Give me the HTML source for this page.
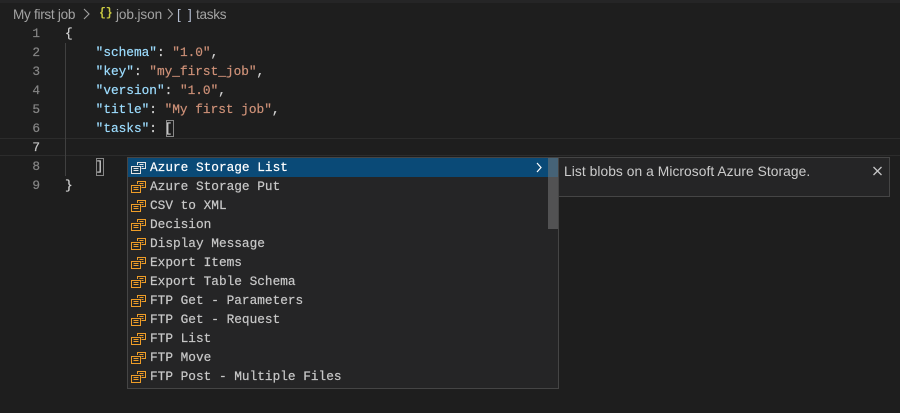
<!DOCTYPE html>
<html><head><meta charset="utf-8"><style>
html,body{margin:0;padding:0;background:#1e1e1e;width:900px;height:413px;overflow:hidden}
div,span{box-sizing:border-box}
.a{position:absolute}
.m{font-family:"Liberation Mono",monospace;font-size:12.77px;white-space:pre;line-height:19px;-webkit-text-stroke:.2px}
.ln{left:0;width:40px;text-align:right;color:#858585}
.c{left:65px;color:#d4d4d4}
.k{color:#9cdcfe}.s{color:#ce9178}
.row{left:128px;width:420px;height:19px;color:#c8c8c8}
.row span{position:absolute;left:22px;top:0}
.row svg{position:absolute;left:3px;top:3px}
.b{font:13.6px/19px 'Liberation Sans',sans-serif;color:#a3a3a3;white-space:pre;letter-spacing:-.3px}
</style></head><body>
<div class="a" style="left:0;top:0;width:900px;height:3px;background:#252526"></div>
<div class="a b" style="left:13px;top:5px">My first job</div>
<svg class="a" style="left:83px;top:8px" width="8" height="12"><path d="M1 1l5 5-5 5" fill="none" stroke="#a0a0a0" stroke-width="1.1"/></svg>
<div class="a" style="left:99px;top:4px;font:bold 11.5px/19px 'Liberation Mono',monospace;color:#cbcb41;letter-spacing:-.2px">{}</div>
<div class="a b" style="left:116px;top:5px;letter-spacing:-.1px">job.json</div>
<svg class="a" style="left:167px;top:8px" width="7" height="12"><path d="M1 1l4.500 5-4.500 5" fill="none" stroke="#a0a0a0" stroke-width="1.1"/></svg>
<div class="a b" style="left:177px;top:5px;color:#b4bdd0;letter-spacing:0">[</div>
<div class="a b" style="left:188px;top:5px;color:#b4bdd0;letter-spacing:0">]</div>
<div class="a b" style="left:196px;top:5px">tasks</div>

<div class="a" style="left:0;top:138px;width:900px;height:18px;border-top:1px solid #2c2c2c;border-bottom:1px solid #2c2c2c"></div>
<div class="a" style="left:65px;top:43px;width:1px;height:133px;background:#404040"></div>

<div class="a m ln" style="top:24px">1</div>
<div class="a m ln" style="top:43px">2</div>
<div class="a m ln" style="top:62px">3</div>
<div class="a m ln" style="top:81px">4</div>
<div class="a m ln" style="top:100px">5</div>
<div class="a m ln" style="top:119px">6</div>
<div class="a m ln" style="top:138px;color:#c6c6c6">7</div>
<div class="a m ln" style="top:157px">8</div>
<div class="a m ln" style="top:176px">9</div>

<div class="a m c" style="top:24px">{</div>
<div class="a m c" style="top:43px">    <span class="k">"schema"</span>: <span class="s">"1.0"</span>,</div>
<div class="a m c" style="top:62px">    <span class="k">"key"</span>: <span class="s">"my_first_job"</span>,</div>
<div class="a m c" style="top:81px">    <span class="k">"version"</span>: <span class="s">"1.0"</span>,</div>
<div class="a m c" style="top:100px">    <span class="k">"title"</span>: <span class="s">"My first job"</span>,</div>
<div class="a m c" style="top:119px">    <span class="k">"tasks"</span>: [</div>
<div class="a m c" style="top:157px">    ]</div>
<div class="a m c" style="top:176px">}</div>
<div class="a" style="left:166px;top:120px;width:8px;height:17px;border:1px solid #888"></div>
<div class="a" style="left:96px;top:158px;width:8px;height:18px;border:1px solid #888"></div>

<svg width="0" height="0" style="position:absolute"><defs>
<g id="i" fill="none" stroke-width="1">
<path d="M6.500 4V1.500h8v6h-4"/><path d="M8.500 3.500h4M10.500 5.500h2"/>
<rect x=".5" y="5.500" width="9" height="7" fill="#252526" fill-opacity=".35"/><path d="M2.500 7.500h5M2.500 9.500h5"/>
</g></defs></svg>

<div class="a" style="left:127px;top:157px;width:432px;height:232px;background:#252526;border:1px solid #454545"></div>
<div class="a" style="left:128px;top:158px;width:430px;height:19px;background:#0a4a77"></div>
<div class="a m row" style="top:158px;color:#fff"><svg width="16" height="14" stroke="#e4e4e4"><use href="#i"/></svg><span>Azure Storage List</span></div>
<div class="a m row" style="top:177px"><svg width="16" height="14" stroke="#ee9d28"><use href="#i"/></svg><span>Azure Storage Put</span></div>
<div class="a m row" style="top:196px"><svg width="16" height="14" stroke="#ee9d28"><use href="#i"/></svg><span>CSV to XML</span></div>
<div class="a m row" style="top:215px"><svg width="16" height="14" stroke="#ee9d28"><use href="#i"/></svg><span>Decision</span></div>
<div class="a m row" style="top:234px"><svg width="16" height="14" stroke="#ee9d28"><use href="#i"/></svg><span>Display Message</span></div>
<div class="a m row" style="top:253px"><svg width="16" height="14" stroke="#ee9d28"><use href="#i"/></svg><span>Export Items</span></div>
<div class="a m row" style="top:272px"><svg width="16" height="14" stroke="#ee9d28"><use href="#i"/></svg><span>Export Table Schema</span></div>
<div class="a m row" style="top:291px"><svg width="16" height="14" stroke="#ee9d28"><use href="#i"/></svg><span>FTP Get - Parameters</span></div>
<div class="a m row" style="top:310px"><svg width="16" height="14" stroke="#ee9d28"><use href="#i"/></svg><span>FTP Get - Request</span></div>
<div class="a m row" style="top:329px"><svg width="16" height="14" stroke="#ee9d28"><use href="#i"/></svg><span>FTP List</span></div>
<div class="a m row" style="top:348px"><svg width="16" height="14" stroke="#ee9d28"><use href="#i"/></svg><span>FTP Move</span></div>
<div class="a m row" style="top:367px"><svg width="16" height="14" stroke="#ee9d28"><use href="#i"/></svg><span>FTP Post - Multiple Files</span></div>
<svg class="a" style="left:535px;top:162px" width="9" height="11"><path d="M2 1l4 4.500-4 4.500" fill="none" stroke="#fff" stroke-width="1.200"/></svg>
<div class="a" style="left:548px;top:158px;width:10px;height:71px;background:rgba(121,121,121,.55)"></div>

<div class="a" style="left:558px;top:157px;width:332px;height:40px;background:#252526;border:1px solid #454545"></div>
<div class="a" style="left:564px;top:162px;font:13.8px/19px 'Liberation Sans',sans-serif;color:#cccccc;white-space:pre;letter-spacing:.06px">List blobs on a Microsoft Azure Storage.</div>
<svg class="a" style="left:872px;top:165px" width="12" height="12"><path d="M1.500 2l8 8M9.500 2l-8 8" stroke="#c5c5c5" stroke-width="1.300" fill="none"/></svg>
</body></html>
